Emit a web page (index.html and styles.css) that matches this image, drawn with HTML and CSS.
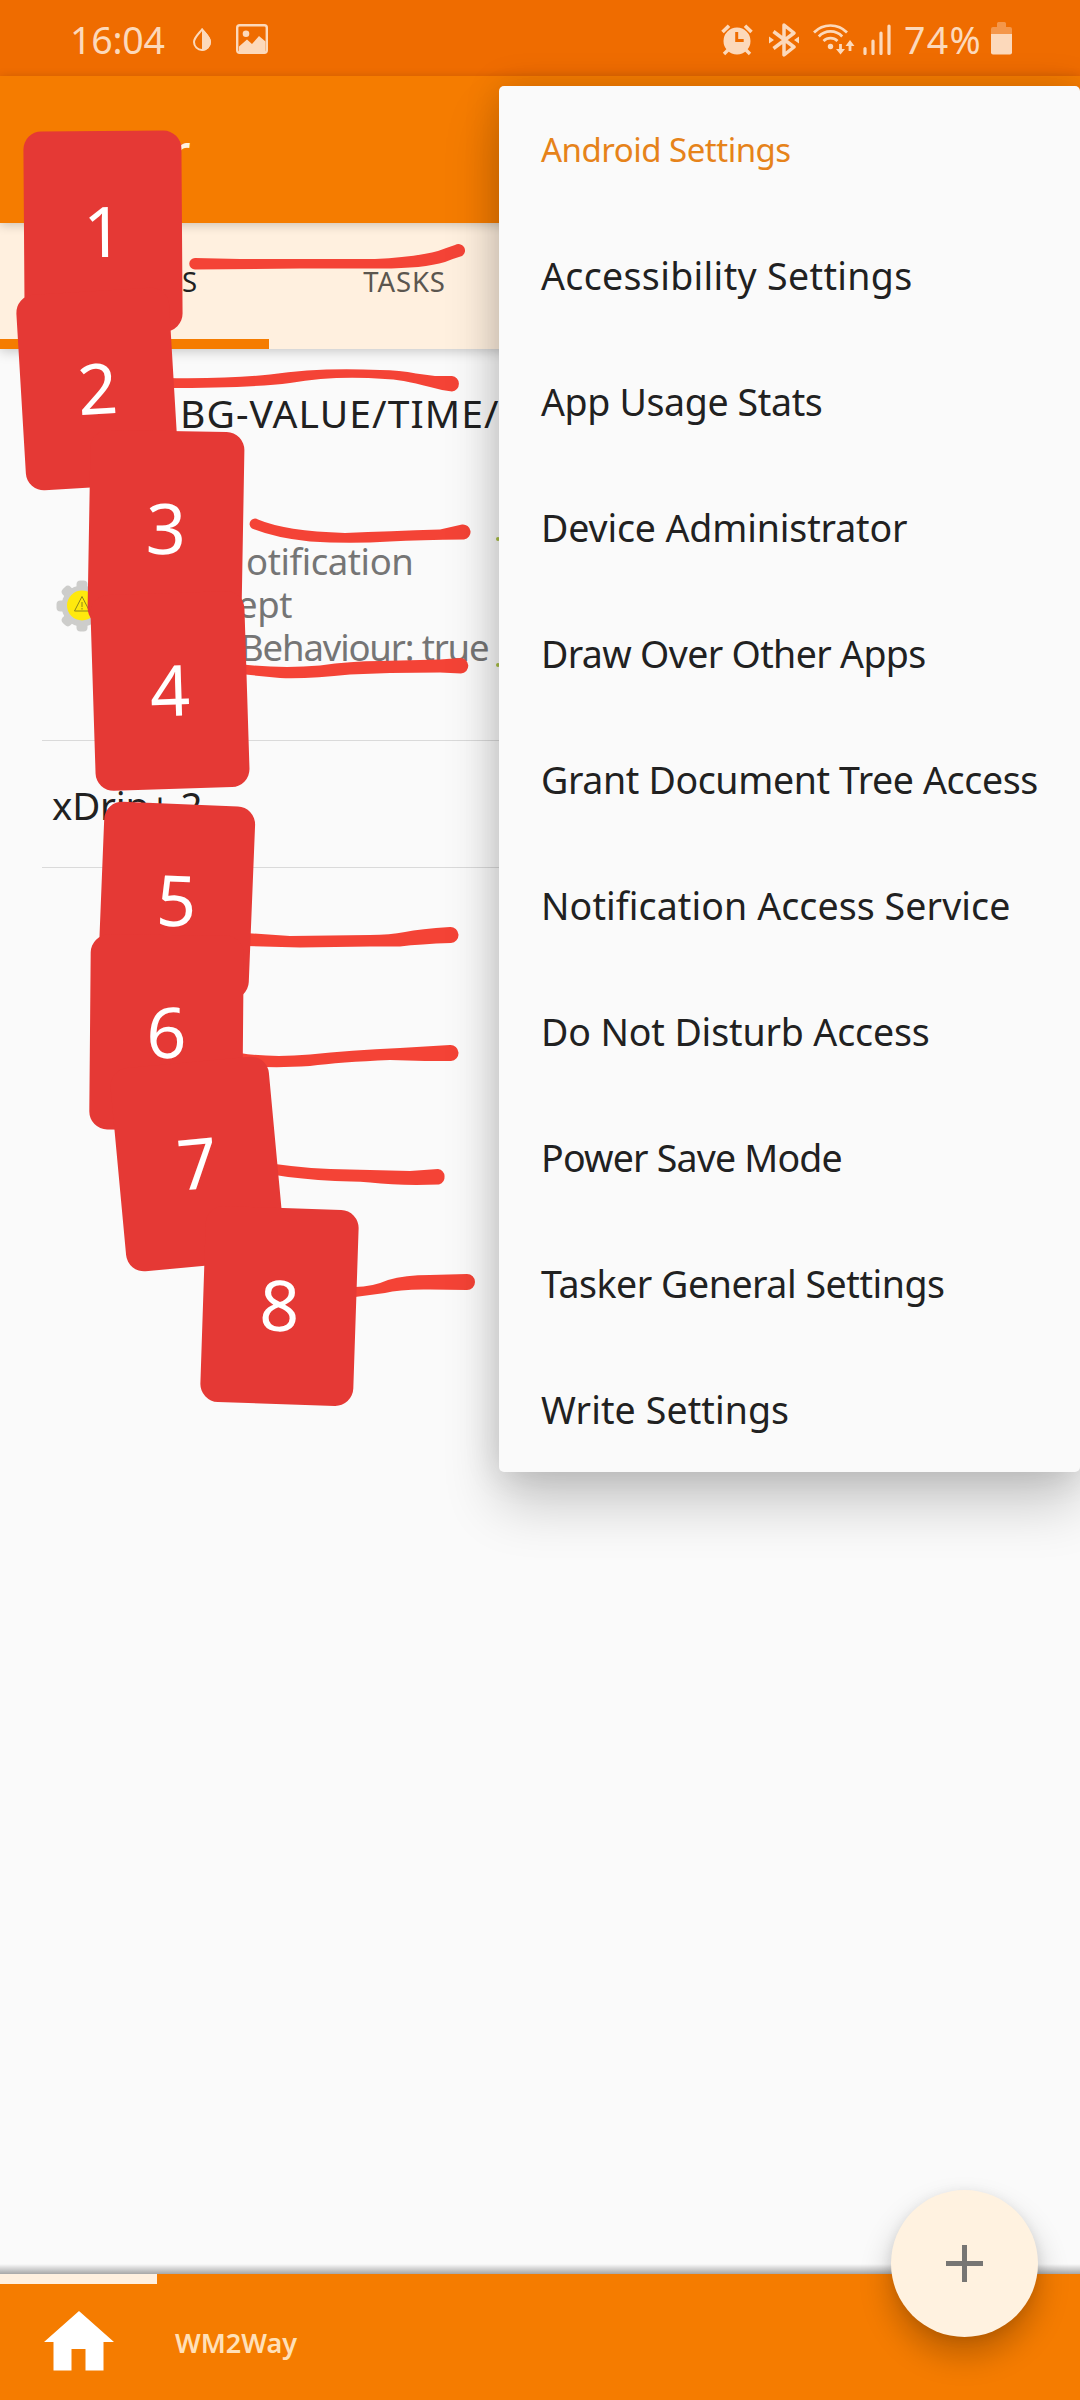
FILE: index.html
```
<!DOCTYPE html>
<html lang="en">
<head>
<meta charset="utf-8">
<title>Tasker</title>
<link rel="stylesheet" href="styles.css">
</head>
<body>
<div class="screen">
  <header class="status">
    <span class="clock">16:04</span>
    <svg class="ic-drop" width="18" height="23" viewBox="0 0 18 23"><path d="M9 1.5C6 5.500 1 9.500 1 14a8 8 0 0 0 16 0C17 9.500 12 5.500 9 1.500z" fill="none" stroke="currentColor" stroke-width="2"/><path d="M9 0c4 5 9 9 9 14a9 9 0 0 1-9 9z" fill="currentColor"/></svg>
    <svg class="ic-photo" width="32" height="30" viewBox="0 0 32 30"><rect x="1.200" y="1.200" width="29.600" height="27.600" rx="2.500" fill="none" stroke="currentColor" stroke-width="2.400"/><circle cx="10" cy="9.800" r="3.300" fill="currentColor"/><path d="M3 22.500l8-7 5 4.500 7-8 6.500 5.500V28H3z" fill="currentColor"/></svg>
    <span class="spacer"></span>
    <svg class="ic-alarm" width="32" height="32" viewBox="0 0 32 32"><g stroke="currentColor" fill="none"><path d="M1.500 8L8 1.700M30.500 8L24 1.700" stroke-width="3.600"/><path d="M7 26l-4 4M25 26l4 4" stroke-width="3.400"/></g><path fill-rule="evenodd" fill="currentColor" d="M16 3.500a13.500 13.500 0 1 0 0 27 13.500 13.500 0 0 0 0-27zM14.200 8h3v7h5.500v3h-8.500z"/></svg>
    <svg class="ic-bt" width="30" height="34" viewBox="0 0 30 34"><path d="M4.500 8.500L25 24l-10 8V2l10 8L4.500 25.500" fill="none" stroke="currentColor" stroke-width="3.500" stroke-linejoin="round"/><path d="M0 13.500l5 3.500-5 3.500zM30 13.500L25 17l5 3.500z" fill="currentColor"/></svg>
    <svg class="ic-wifi" width="42" height="34" viewBox="0 0 42 34"><g fill="none" stroke="currentColor" stroke-width="2.700"><path d="M1 10.500a23 23 0 0 1 33 0"/><path d="M5.800 14.500a16 16 0 0 1 23.400 0"/><path d="M10.500 19a10 10 0 0 1 14 0"/><path d="M27.500 22v8M37 29v-8" stroke-width="2.800"/></g><circle cx="17.500" cy="24.500" r="2.700" fill="currentColor"/><path d="M23 27h9l-4.500 5.500zM32.500 24h9L37 18z" fill="currentColor"/></svg>
    <svg class="ic-signal" width="28" height="31" viewBox="0 0 28 31"><path d="M2 24.500v5M10 17v12.500M18 9v20.500M26 2v27.500" stroke="currentColor" stroke-width="3.200" stroke-linecap="round"/></svg>
    <span class="percent">74%</span>
    <svg class="ic-battery" width="21" height="33" viewBox="0 0 21 33"><path d="M2 5h4V1.500Q6 0 7.500 0h6Q15 0 15 1.500V5h4q2 0 2 2v5H0V7q0-2 2-2z" fill="currentColor" opacity=".4"/><path d="M0 12h21v18.500q0 2-2 2H2q-2 0-2-2z" fill="currentColor"/></svg>
  </header>

  <div class="appbar"><h1 class="title">Tasker</h1></div>

  <nav class="tabs">
    <span class="tab active">PROFILES</span>
    <span class="tab">TASKS</span>
  </nav>

  <main class="list">
    <section class="profile open">
      <h2 class="name">BG-VALUE/TIME/</h2>
      <div class="context">
        <svg class="gear" width="54" height="56" viewBox="-27 -27 54 56"><g fill="#cdcdcb"><circle r="20.500"/><rect x="-5.500" y="-25.500" width="11" height="51" rx="4"/><rect x="-25.500" y="-5.500" width="51" height="11" rx="4"/><g transform="rotate(45)"><rect x="-5.500" y="-25.500" width="11" height="51" rx="4"/><rect x="-25.500" y="-5.500" width="51" height="11" rx="4"/></g></g><circle cy="-.5" r="15" fill="#ffe90d"/><path d="M0-9.500L7.500 5h-15zM0-4v5M0 2v1.500" fill="none" stroke="#8d841c" stroke-width="1"/></svg>
        <p class="detail"><span class="d1">otification</span><span class="d2">ept</span><span class="d3">Behaviour: true</span></p>
        <span class="marks"><i></i><i></i></span>
      </div>
    </section>
    <section class="profile">
      <h2 class="name">xDrip+ 2</h2>
    </section>
  </main>

  <footer class="projects">
    <span class="project home"><svg width="70" height="60" viewBox="0 0 70 60"><path d="M35 0L70 31H59.500v28.500h-18V38h-14v21.500h-18V31H0z" fill="#fff"/></svg></span>
    <span class="project">WM2Way</span>
  </footer>

  <button class="fab" aria-label="Add"><svg width="37" height="37" viewBox="0 0 37 37"><path d="M18.500 0v37M0 18.500h37" stroke="#777674" stroke-width="5"/></svg></button>

  <svg class="ink" width="500" height="1320" viewBox="0 0 500 1320" fill="#f44336">
    <path d="M195 258L240 259L375 259Q415 257 438 251Q446 248 455 245A6 6 0 0 1 462 256Q452 259 445 262Q422 269 375 268.500L300 268.500L195 269.500A5.700 5.700 0 0 1 195 258z"/>
    <path d="M165 378Q230 379 270 374.500Q320 367 380 370Q400 370 416 373.500L435 376L452 376A7.800 7.800 0 0 1 452 391.500Q440 390 430 387Q400 379 385 379Q335 375 290 383Q250 388 165 388z"/>
    <path d="M258 519.500Q285 531 345 533Q390 531 440 529.500L462 524.500A7.500 7.500 0 0 1 464 539.500Q420 540 390 541.500Q350 544 310 541.500Q275 538 252 528.500A5 5 0 0 1 258 519.500z"/>
    <path d="M240 664Q280 669 320 665.500Q350 661 380 661L440 659.500L460 658A7.700 7.700 0 0 1 461 673.500L440 672.500L390 673L350 674.500Q310 679 280 678L240 674z"/>
    <path d="M245 933L290 936L370 935Q390 935 405 932Q420 929 450 927A8 8 0 0 1 451 943Q420 944 400 946.500L370 946.500L300 947.500L245 946z"/>
    <path d="M240 1053Q270 1058 310 1054.500Q350 1050 400 1048L450 1045A8 8 0 0 1 451 1061L425 1061L390 1060Q340 1062 310 1066Q260 1069 240 1064z"/>
    <path d="M275 1164Q310 1169 350 1169.500L410 1171L438 1169A8 8 0 0 1 439 1184.500Q400 1186 370 1182.500Q350 1181 335 1181Q300 1179 275 1175z"/>
    <path d="M355 1287Q372 1287 388 1280Q405 1275 430 1275L467 1274A8 8 0 0 1 467 1290L430 1289.500Q400 1289 385 1293L355 1297z"/>
  </svg>

  <span class="card c1">1</span>
  <span class="card c2">2</span>
  <span class="card c3">3</span>
  <span class="card c4">4</span>
  <span class="card c5">5</span>
  <span class="card c6">6</span>
  <span class="card c7">7</span>
  <span class="card c8">8</span>

  <ul class="menu">
    <li class="head">Android Settings</li>
    <li class="wide">Accessibility Settings</li>
    <li class="snug">App Usage Stats</li>
    <li class="even">Device Administrator</li>
    <li class="tight">Draw Over Other Apps</li>
    <li class="snug">Grant Document Tree Access</li>
    <li>Notification Access Service</li>
    <li class="even">Do Not Disturb Access</li>
    <li class="tighter">Power Save Mode</li>
    <li class="close">Tasker General Settings</li>
    <li>Write Settings</li>
  </ul>
</div>
</body>
</html>
```
FILE: styles.css
```
* { box-sizing: border-box; margin: 0; padding: 0; }
body { background: #fafafa; }
.screen {
  position: relative;
  width: 1080px;
  height: 2400px;
  overflow: hidden;
  display: flex;
  flex-direction: column;
  background: #fafafa;
  color: #212121;
  font-family: "Noto Sans", "Open Sans", sans-serif;
}

/* status bar */
.status {
  flex: none;
  height: 76px;
  display: flex;
  align-items: flex-start;
  padding: 0 68px 0 70px;
  background: #ef6c00;
  color: #fcd9bb;
  font-size: 37.500px;
  line-height: 52px;
}
.status svg { display: block; flex: none; }
.clock { width: 123px; padding-top: 14px; white-space: nowrap; letter-spacing: -.2px; }
.ic-drop { margin-top: 28px; }
.ic-photo { margin: 24px 0 0 25px; }
.spacer { flex: 1; }
.ic-alarm { margin-top: 24px; }
.ic-bt { margin: 23px 0 0 16px; }
.ic-wifi { margin: 22px 0 0 14px; }
.ic-signal { margin: 24px 0 0 8px; }
.percent { width: 100px; padding: 14px 0 0 13px; white-space: nowrap; letter-spacing: 1.300px; }
.ic-battery { margin-top: 22px; }

/* app bar and tabs */
.appbar {
  flex: none;
  height: 147px;
  display: flex;
  align-items: center;
  padding-left: 41px;
  background: #f57c00;
  color: #fff3e0;
  box-shadow: 0 2px 10px rgba(0, 0, 0, .2);
  z-index: 2;
}
.title { font-size: 48px; font-weight: 500; line-height: 50px; padding-top: 2px; letter-spacing: .2px; }
.tabs {
  flex: none;
  height: 126px;
  display: grid;
  grid-template-columns: 269px 269px;
  background: #fff0df;
  box-shadow: 0 2px 12px rgba(0, 0, 0, .22);
  z-index: 1;
}
.tab {
  display: flex;
  align-items: center;
  justify-content: center;
  padding: 0 0 9px 2px;
  font-size: 27.500px;
  letter-spacing: .9px;
  color: #5b564f;
}
.tab.active { color: #212121; border-bottom: 10px solid #f57c00; padding: 1px 4px 0 0; }

/* profile list */
.list { flex: 1; padding-left: 42px; }
.profile { height: 127px; padding: 0 0 0 10px; border-bottom: 1px solid #dadada; }
.profile.open { height: 392px; }
.name {
  width: 446px;
  padding-top: 34px;
  font-size: 38.500px;
  font-weight: 400;
  line-height: 60px;
  letter-spacing: -.2px;
  white-space: nowrap;
}
.open .name { padding: 34px 0 0; margin-left: 128px; width: 319px; font-size: 39px; letter-spacing: 1.100px; }
.context { display: flex; margin-top: 94px; height: 130px; }
.gear { flex: none; margin: 42px 0 0 3px; }
.detail {
  width: 389px;
  margin: 3px 0 0 24px;
  display: flex;
  flex-direction: column;
  align-items: flex-start;
  font-size: 36.500px;
  line-height: 43px;
  color: #757575;
  white-space: nowrap;
}
.d1 { margin-left: 113px; letter-spacing: -.4px; }
.d2 { margin-left: 104px; letter-spacing: -.4px; }
.d3 { margin-left: 107px; letter-spacing: -1.150px; }
.marks { display: flex; flex-direction: column; gap: 122px; margin: 0 0 0 -26px; }
.marks i { width: 4px; height: 9px; border-radius: 2px; background: #a9bf45; }

/* project bar */
.projects {
  flex: none;
  height: 126px;
  display: flex;
  background: #f57c00;
  position: relative;
}
.projects::before {
  content: "";
  position: absolute;
  left: 0;
  right: 0;
  top: -10px;
  height: 10px;
  background: linear-gradient(rgba(0, 0, 0, 0), rgba(0, 0, 0, .33));
}
.project {
  display: flex;
  align-items: center;
  padding: 10px 0 0 18px;
  font-size: 27px;
  font-weight: 600;
  color: #ffe0b8;
}
.project.home { width: 157px; padding: 0 0 3px 44px; border-top: 10px solid #fff0df; }

.fab {
  position: absolute;
  left: 891px;
  top: 2190px;
  width: 147px;
  height: 147px;
  display: flex;
  align-items: center;
  justify-content: center;
  border: 0;
  border-radius: 50%;
  background: #fff2e0;
  box-shadow: 0 18px 32px rgba(0, 0, 0, .24), 0 2px 12px rgba(0, 0, 0, .08);
}

/* numbered cards and pen strokes placed freely over the screen */
.ink { position: absolute; left: 0; top: 0; z-index: 3; }
.card {
  position: absolute;
  z-index: 4;
  display: flex;
  align-items: center;
  justify-content: center;
  width: 154px;
  height: 196px;
  padding-bottom: 4px;
  border-radius: 18px;
  background: #e53935;
  color: #fff;
  font-size: 70px;
  line-height: 80px;
}
.c1 { left: 24px; top: 131px; width: 158px; height: 201px; transform: rotate(-.4deg); }
.c2 { left: 21px; top: 291px; width: 153px; transform: rotate(-3.400deg); }
.c3 { left: 89px; top: 431px; transform: rotate(1deg); }
.c4 { left: 93px; top: 593px; transform: rotate(-1.800deg); }
.c5 { left: 101px; top: 804px; width: 151px; height: 193px; transform: rotate(2.300deg); }
.c6 { left: 90px; top: 935px; width: 153px; height: 195px; transform: rotate(.5deg); }
.c7 { left: 118px; top: 1062px; width: 159px; height: 204px; transform: rotate(-5.300deg); }
.c8 { left: 203px; top: 1208px; width: 153px; transform: rotate(1.900deg); }

/* settings popup */
.menu {
  position: absolute;
  z-index: 5;
  left: 499px;
  top: 86px;
  width: 581px;
  height: 1386px;
  border-radius: 5px;
  background: #fafafa;
  list-style: none;
  box-shadow: 0 32px 56px rgba(0, 0, 0, .2), 0 0 36px rgba(0, 0, 0, .14);
}
.menu li {
  height: 126px;
  display: flex;
  align-items: center;
  padding: 1px 0 0 42px;
  font-size: 37.500px;
  letter-spacing: .1px;
  white-space: nowrap;
}
.menu .head { font-size: 33px; letter-spacing: -.5px; color: #e6831a; }
.menu .wide { letter-spacing: .35px; }
.menu .even { letter-spacing: -.13px; }
.menu .snug { letter-spacing: -.36px; }
.menu .close { letter-spacing: -.45px; }
.menu .tight { letter-spacing: -.65px; }
.menu .tighter { letter-spacing: -.8px; }
```
